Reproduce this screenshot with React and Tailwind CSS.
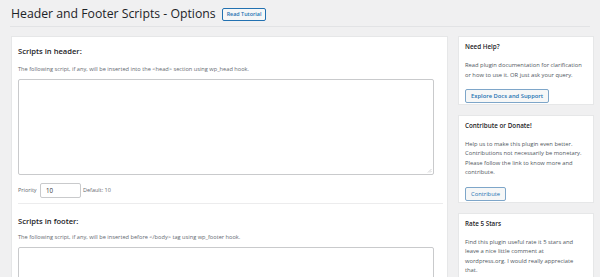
export default function App() {
  const font = { fontFamily: '"Open Sans", "Noto Sans", sans-serif' };
  return (
    <div className="w-[600px] h-[277px] overflow-hidden bg-[#f0f0f1] text-[#3c434a]" style={font}>
      <div className="mx-[10px] flex items-center gap-[6px] pl-[1px] pt-[6px] pb-[4px] border-b border-[#e2e3e5]">
        <h1 className="text-[12.25px] leading-[16px] text-[#1d2327]">Header and Footer Scripts - Options</h1>
        <button className="h-[13px] px-[4px] text-[5.4px] leading-[11px] font-semibold text-[#2271b1] border border-[#2271b1] rounded-[2px] bg-[#f6f7f7]">
          Read Tutorial
        </button>
      </div>
      <div className="flex gap-[10px] pl-[11px] pt-[9px]">
        <div className="w-[437px] h-[260px] bg-white border border-[#e6e7e8] px-[6px] pt-[9px]">
          <h2 className="text-[7.6px] leading-[10px] font-semibold text-[#1d2327]">Scripts in header:</h2>
          <p className="mt-[9px] text-[5.65px] leading-[8px] text-[#646970]">
            The following script, if any, will be inserted into the &lt;head&gt; section using wp_head hook.
          </p>
          <div className="relative mt-[6px] w-[416px] h-[96px] border border-[#c9cacc] rounded-[2px]">
            <svg className="absolute right-[1px] bottom-[1px]" width="5" height="5" viewBox="0 0 5 5">
              <path d="M4.5 1 L1 4.5 M4.5 3 L3 4.5" stroke="#b5b7ba" strokeWidth="0.6" />
            </svg>
          </div>
          <div className="mt-[8px] flex items-center text-[5.5px] text-[#646970]">
            <span className="w-[22px]">Priority</span>
            <div className="w-[41px] h-[15px] border border-[#c9cacc] rounded-[2px] flex items-center pl-[5px] text-[6.2px] text-[#2c3338]">10</div>
            <span className="ml-[2px]">Default: 10</span>
          </div>
          <div className="mt-[5px] w-[425px] border-t border-[#ececed]" />
          <h2 className="mt-[12px] text-[7.6px] leading-[10px] font-semibold text-[#1d2327]">Scripts in footer:</h2>
          <p className="mt-[7px] text-[5.65px] leading-[8px] text-[#646970]">
            The following script, if any, will be inserted before &lt;/body&gt; tag using wp_footer hook.
          </p>
          <div className="mt-[6px] w-[416px] h-[96px] border border-[#c9cacc] rounded-[2px]" />
        </div>
        <div className="w-[136px] flex flex-col gap-[10px]">
          <div className="h-[69px] bg-white border border-[#e6e7e8] pl-[6px] pr-[9px] pt-[5px]">
            <h3 className="text-[6.3px] leading-[9px] font-semibold text-[#1d2327]">Need Help?</h3>
            <p className="mt-[10px] text-[5.8px] leading-[9.5px] text-[#50575e]">
              Read plugin documentation for clarification or how to use it. OR just ask your query.
            </p>
            <button className="mt-[4px] h-[14px] px-[5px] text-[5.8px] leading-[12px] font-semibold text-[#2271b1] border border-[#7ea6c9] rounded-[2px] bg-[#f6f7f7]">
              Explore Docs and Support
            </button>
          </div>
          <div className="h-[88px] bg-white border border-[#e6e7e8] pl-[6px] pr-[9px] pt-[5px]">
            <h3 className="text-[6.3px] leading-[9px] font-semibold text-[#1d2327]">Contribute or Donate!</h3>
            <p className="mt-[10px] text-[5.8px] leading-[9.4px] text-[#50575e]">
              Help us to make this plugin even better. Contributions not necessarily be monetary. Please follow the link to know more and contribute.
            </p>
            <button className="mt-[4px] h-[14px] px-[5px] text-[5.8px] leading-[12px] text-[#2271b1] border border-[#7ea6c9] rounded-[2px] bg-[#f6f7f7]">
              Contribute
            </button>
          </div>
          <div className="h-[80px] bg-white border border-[#e6e7e8] pl-[6px] pr-[9px] pt-[5px]">
            <h3 className="text-[6.3px] leading-[9px] font-semibold text-[#1d2327]">Rate 5 Stars</h3>
            <p className="mt-[10px] text-[5.8px] leading-[9.4px] text-[#50575e]">
              Find this plugin useful rate it 5 stars and leave a nice little comment at wordpress.org. I would really appreciate that.
            </p>
          </div>
        </div>
      </div>
    </div>
  );
}
